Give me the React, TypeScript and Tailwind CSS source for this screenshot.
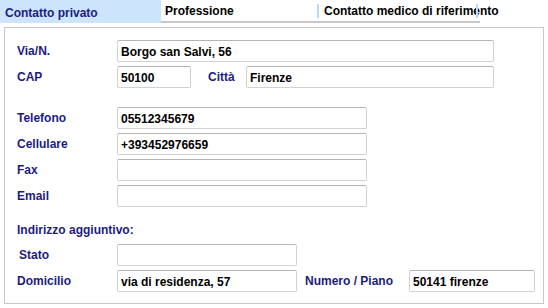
import React from "react";

const font = { fontFamily: '"Liberation Sans", Arial, sans-serif' };

const Label: React.FC<{ text: string; className?: string }> = ({ text, className }) => (
    <div className={`text-[12px] font-bold text-[#1c1c80] ${className ?? ""}`}>{text}</div>
);

const Field: React.FC<{ value?: string; className: string }> = ({ value, className }) => (
    <div
        className={`h-[22px] flex items-center px-[3px] pt-[1px] bg-white border border-[#d2d2d2] border-t-[#b4b4b4] rounded-[2px] text-[12px] font-bold text-black ${className}`}
    >
        {value}
    </div>
);

export default function App() {
    return (
        <div className="w-[548px] h-[308px] bg-white overflow-hidden" style={font}>
            {/* Tabs */}
            <div className="flex h-[23px] items-stretch">
                <div className="w-[161px] bg-[#cce4fc] pl-[5px] pt-[4px] text-[12px] font-bold text-[#1c1c80]">
                    Contatto privato
                </div>
                <div className="w-[319px] flex border-b-2 border-[#c8c8c8] text-[12px] font-bold text-black">
                    <div className="w-[156px] pl-[4px] pt-[2px]">Professione</div>
                    <div className="w-[2px] bg-[#bcd8f8] mt-[4px] mb-[3px]" />
                    <div className="w-[159px] pl-[5px] pt-[2px] whitespace-nowrap relative">
                        Contatto medico di riferimento
                        <div className="absolute right-[0px] top-[4px] bottom-[3px] w-[2px] bg-[#bcd8f8]" />
                    </div>
                </div>
            </div>

            {/* Panel */}
            <div className="ml-[4px] mt-[4px] w-[540px] h-[277px] border border-[#c8c8c8] pl-[12px] pt-[12px]">
                <div className="flex items-center h-[22px]">
                    <Label text="Via/N." className="w-[100px]" />
                    <Field value="Borgo san Salvi, 56" className="w-[377px]" />
                </div>
                <div className="flex items-center h-[22px] mt-[4px]">
                    <Label text="CAP" className="w-[100px]" />
                    <Field value="50100" className="w-[74px]" />
                    <Label text="Città" className="w-[55px] pl-[17px]" />
                    <Field value="Firenze" className="w-[248px]" />
                </div>

                <div className="flex flex-col gap-[4px] mt-[19px]">
                    {[
                        ["Telefono", "05512345679"],
                        ["Cellulare", "+393452976659"],
                        ["Fax", ""],
                        ["Email", ""],
                    ].map(([l, v]) => (
                        <div key={l} className="flex items-center h-[22px]">
                            <Label text={l} className="w-[100px]" />
                            <Field value={v} className="w-[250px]" />
                        </div>
                    ))}
                </div>

                <div className="mt-[14px] text-[12px] text-[#1c1c80] font-semibold">Indirizzo aggiuntivo:</div>

                <div className="flex items-center h-[22px] mt-[5px]">
                    <Label text="Stato" className="w-[100px] pl-[2px]" />
                    <Field className="w-[180px]" />
                </div>
                <div className="flex items-center h-[22px] mt-[4px]">
                    <Label text="Domicilio" className="w-[100px]" />
                    <Field value="via di residenza, 57" className="w-[180px]" />
                    <Label text="Numero / Piano" className="w-[112px] pl-[8px]" />
                    <Field value="50141 firenze" className="w-[126px]" />
                </div>
            </div>
        </div>
    );
}
